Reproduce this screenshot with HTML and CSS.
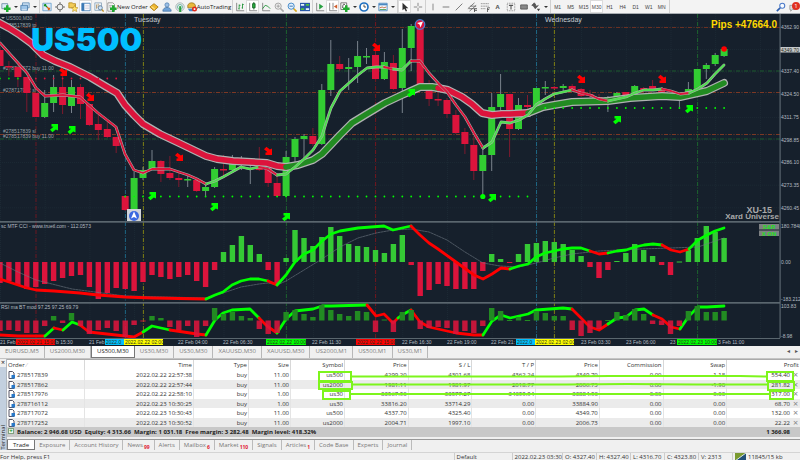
FILE: index.html
```html
<!DOCTYPE html>
<html lang="en">
<head>
<meta charset="utf-8">
<title>US500,M30</title>
<link rel="stylesheet" href="styles.css">
</head>
<body>
<header class="toolbar">
  <div class="group">
    <button class="tool drop" aria-label="New chart"><svg viewBox="0 0 12 12"><path d="M1 2h7v6H1z" fill="#dcecf7" stroke="#6b8ba4"/><path d="M6 4h3v2.500h2.500v3H9V12H6V9.500H3.500v-3H6z" fill="#20b030"/></svg></button>
    <button class="tool drop" aria-label="Profiles"><svg viewBox="0 0 12 12"><path d="M3 1h8v6H3z" fill="#cfe3f5" stroke="#5d8bb5"/><path d="M1 4h8v6H1z" fill="#9cc4e8" stroke="#4a7dac"/><path d="M2 9.500h6" stroke="#fff"/></svg></button>
  </div>
  <div class="group">
    <button class="tool" aria-label="Market watch"><svg viewBox="0 0 12 12"><path d="M1 1.500h10v9H1z" fill="#d8eaf8" stroke="#6aa0cc"/><path d="M3 3l3 3M3 3h2M3 3v2" stroke="#109020" stroke-width="1.500"/><path d="M6 6l3 3M9 9H7M9 9V7" stroke="#e06010" stroke-width="1.500"/></svg></button>
    <button class="tool" aria-label="Data window"><svg viewBox="0 0 12 12"><path d="M6 0v12M0 6h12" stroke="#555"/><circle cx="6" cy="6" r="3.500" fill="#eee" stroke="#555"/></svg></button>
    <button class="tool" aria-label="Navigator"><svg viewBox="0 0 12 12"><path d="M1 3V1h4l1 1h3v5H1z" fill="#f2cc58" stroke="#b58a20"/><path d="M8 4l1.200 2.500 2.800.3-2 2 .5 2.700L8 10.200 5.500 11.500 6 8.800l-2-2 2.800-.3z" fill="#ffe36b" stroke="#b58a20" stroke-width=".7"/></svg></button>
    <button class="tool on" aria-label="Terminal"><svg viewBox="0 0 12 12"><path d="M1 1.500h10v9H1z" fill="#fff" stroke="#3a78b5"/><path d="M1 1.500h3v9H1z" fill="#3a78b5"/><path d="M5 4h5M5 6h5M5 8h5" stroke="#ccd"/></svg></button>
    <button class="tool" aria-label="Strategy tester"><svg viewBox="0 0 12 12"><path d="M1 1h8v9H1z" fill="#eef4fa" stroke="#8aa4ba"/><path d="M3 3v5M5 2v5M7 4v4" stroke="#b09060"/><circle cx="7.500" cy="7" r="2.500" fill="#cfe4f7" stroke="#58799a"/><path d="M9.500 9l2 2.500" stroke="#c09020" stroke-width="1.500"/></svg></button>
  </div>
  <div class="group">
    <button class="tool wide"><svg viewBox="0 0 12 12"><path d="M1 1h6l2 2v8H1z" fill="#fff" stroke="#888"/><path d="M2.500 4h4M2.500 6h3" stroke="#999"/><path d="M6 4h3v2.500h2.500v3H9V12H6V9.500H3.500v-3H6z" fill="#20a830"/></svg>New Order</button>
    <button class="tool" aria-label="MetaEditor"><svg viewBox="0 0 12 12"><path d="M1 6l5-4 5 4-5 4.500z" fill="#f0b830" stroke="#a87810"/><path d="M3 5.500l4 3" stroke="#fff3b0"/></svg></button>
    <button class="tool" aria-label="Community"><svg viewBox="0 0 12 12"><circle cx="6" cy="3.500" r="2.500" fill="#9cc0e6" stroke="#5a86b4"/><path d="M1 11c0-6 10-6 10 0z" fill="#6fa2d8" stroke="#4a78a8"/></svg></button>
    <button class="tool" aria-label="Signals"><svg viewBox="0 0 12 12"><circle cx="6" cy="6" r="5" fill="none" stroke="#9aa"/><circle cx="6" cy="6" r="3" fill="none" stroke="#5a9"/><path d="M5 5h2.500v7H5z" fill="#2aa040"/></svg></button>
    <button class="tool wide"><svg viewBox="0 0 12 12"><path d="M1 4c1-4 8-4 9 0v3H1z" fill="#e9b93c" stroke="#9a7a20"/><path d="M1 8h8l-2 3H3z" fill="#4888c8"/><circle cx="9" cy="8.500" r="3" fill="#e02818"/><path d="M8 7.500h2v2H8z" fill="#fff"/></svg>AutoTrading</button>
  </div>
  <div class="group">
    <button class="tool" aria-label="Bar chart"><svg viewBox="0 0 12 12"><path d="M2 1v9.500h9" fill="none" stroke="#777"/><path d="M5 3v6M4 8h1M5 4h1.500M9 2v6M8 7h1M9 3h1.500" stroke="#189030"/></svg></button>
    <button class="tool on" aria-label="Candlesticks"><svg viewBox="0 0 12 12"><path d="M2 1v9.500h9" fill="none" stroke="#777"/><path d="M7 0v9" stroke="#106020"/><path d="M5.500 2h3v5h-3z" fill="#28b040" stroke="#106020"/></svg></button>
    <button class="tool" aria-label="Line chart"><svg viewBox="0 0 12 12"><path d="M2 1v9.500h9" fill="none" stroke="#777"/><path d="M2 8l3-4 3 1 3 3" fill="none" stroke="#189030"/></svg></button>
    <button class="tool" aria-label="Zoom in"><svg viewBox="0 0 12 12"><path d="M7.500 7.500l4 4" stroke="#aaa" stroke-width="2"/><circle cx="5" cy="5" r="3.700" fill="#eee" stroke="#999"/><path d="M3 5h4M5 3v4" stroke="#999"/></svg></button>
    <button class="tool" aria-label="Zoom out"><svg viewBox="0 0 12 12"><path d="M7.500 7.500l4 4" stroke="#d8a820" stroke-width="2"/><circle cx="5" cy="5" r="3.700" fill="#e4f2ff" stroke="#2878c0"/><path d="M3 5h4" stroke="#2060a0"/></svg></button>
    <button class="tool" aria-label="Tile windows"><svg viewBox="0 0 12 12"><path d="M0 1h12v10H0z" fill="#2858a8"/><path d="M1 2.500h4v2H1zM7 7.500h4v2H7z" fill="#e8f4ff"/><path d="M7 2.500h4v2H7zM1 7.500h4v2H1z" fill="#50c040"/></svg></button>
  </div>
  <div class="group">
    <button class="tool" aria-label="Auto scroll"><svg viewBox="0 0 12 12"><path d="M2 1v9.500h9" fill="none" stroke="#777"/><path d="M5 2l5 3.500L5 9z" fill="#28a040"/></svg></button>
    <button class="tool on" aria-label="Chart shift"><svg viewBox="0 0 12 12"><path d="M2 1v9.500h9M6 1v8" fill="none" stroke="#777"/><path d="M11 3L7 5.500 11 8z" fill="#d06030"/></svg></button>
    <button class="tool drop" aria-label="Indicators"><svg viewBox="0 0 12 12"><path d="M1 1h7v8H1z" fill="#fff" stroke="#666"/><path d="M3 7c1-6 1-4 3-4" fill="none" stroke="#333"/><path d="M6 4h3v2.500h2.500v3H9V12H6V9.500H3.500v-3H6z" fill="#20a830"/></svg></button>
    <button class="tool drop" aria-label="Periods"><svg viewBox="0 0 12 12"><circle cx="6" cy="6" r="4.800" fill="#fff" stroke="#2070c0" stroke-width="2"/><path d="M6 3v3h2.500" fill="none" stroke="#333"/></svg></button>
    <button class="tool drop" aria-label="Templates"><svg viewBox="0 0 12 12"><path d="M1 1.500h10v9H1z" fill="#f2f8ff" stroke="#4a88c0"/><path d="M1 2h10v2H1z" fill="#4a88c0"/><path d="M2 7l3-1 2 1 3-1" fill="none" stroke="#c06030"/><path d="M2 9h8" stroke="#40a050"/></svg></button>
  </div>
  <div class="group">
    <button class="tool on" aria-label="Cursor"><svg viewBox="0 0 12 12"><path d="M3 1v9l2.200-2L7 11.500l1.500-.8L7 7.500h3z" fill="#333"/></svg></button>
    <button class="tool" aria-label="Crosshair"><svg viewBox="0 0 12 12"><path d="M6 1v4M6 7v4M1 6h4M7 6h4" stroke="#777"/></svg></button>
  </div>
  <div class="group">
    <button class="tool" aria-label="Vertical line"><svg viewBox="0 0 12 12"><path d="M6 2v8" stroke="#777"/></svg></button>
    <button class="tool" aria-label="Horizontal line"><svg viewBox="0 0 12 12"><path d="M2 6h8" stroke="#666"/></svg></button>
    <button class="tool" aria-label="Trendline"><svg viewBox="0 0 12 12"><path d="M2 10l8-8" stroke="#666"/></svg></button>
    <button class="tool" aria-label="Channel"><svg viewBox="0 0 12 12"><path d="M1 8l8-7M3 11l8-7M2 8h7M4 5h7" stroke="#666"/><path d="M9 8v4M9 10h3M9 8h3" stroke="#444"/></svg></button>
    <button class="tool" aria-label="Fibonacci"><svg viewBox="0 0 12 12"><path d="M1 2h10M1 5h10M1 8h6" stroke="#888" stroke-dasharray="1.500 .5"/><path d="M9 7v5M9 9h2M9 7h3" stroke="#555"/></svg></button>
    <button class="tool glyph">A</button>
    <button class="tool" aria-label="Text label"><svg viewBox="0 0 12 12"><path d="M1.500 1.500h9v9h-9z" fill="none" stroke="#777" stroke-dasharray="1 1"/><path d="M3.500 4h5M6 4v5" stroke="#555" stroke-width="1.300"/></svg></button>
    <button class="tool" aria-label="Shapes"><svg viewBox="0 0 12 12"><path d="M2 3.500h8v5H2z" fill="#888" stroke="#555"/></svg></button>
    <button class="tool drop" aria-label="Arrows"><svg viewBox="0 0 12 12"><path d="M1 4l3-3 2 3-2 1zM3 5l2 3 4-4" fill="#555" stroke="#555"/><path d="M7 8l4 0-2 3z" fill="#444"/></svg></button>
  </div>
  <div class="group frames">
    <button class="tool">M1</button><button class="tool">M5</button><button class="tool">M15</button><button class="tool on">M30</button><button class="tool">H1</button><button class="tool">H4</button><button class="tool">D1</button><button class="tool">W1</button><button class="tool">MN</button>
  </div>
  <div class="group end">
    <button class="tool" aria-label="Search"><svg viewBox="0 0 12 12"><path d="M5 7l-4 4" stroke="#3060b0" stroke-width="2"/><circle cx="7.500" cy="4.500" r="3" fill="#f8fbff" stroke="#4878c8" stroke-width="1.300"/></svg></button>
    <button class="tool alerts" aria-label="Notifications"><svg viewBox="0 0 12 12"><path d="M1 4h8v5H4l-2 2V9H1z" fill="#ddd" stroke="#999"/></svg><span class="badge">1</span></button>
  </div>
</header>

<main>
  <svg class="chart" id="chart" viewBox="0 14 800 332" role="img" aria-label="US500 M30 price chart with CCI and RSI"></svg>

  <nav class="charttabs">
    <a href="#">EURUSD,M5</a><a href="#">US2000,M30</a><a href="#" class="active">US500,M30</a><a href="#">US30,M30</a><a href="#">US30,M30</a><a href="#">XAUUSD,M30</a><a href="#">XAUUSD,M30</a><a href="#">US2000,M1</a><a href="#">US500,M1</a><a href="#">US30,M1</a>
    <span class="scroll">◂ &nbsp; ▸</span>
  </nav>

  <section class="terminal">
    <aside class="rail"><button class="close" aria-label="Close terminal">×</button><span class="railname">Terminal</span></aside>
    <div class="panel">
      <div class="orders">
        <table>
          <colgroup><col class="c-order"><col class="c-time"><col class="c-type"><col class="c-size"><col class="c-symbol"><col class="c-num"><col class="c-num"><col class="c-num"><col class="c-num"><col class="c-num"><col class="c-num"><col class="c-profit"><col class="c-x"></colgroup>
          <thead><tr><th>Order <span class="sort">⁄</span></th><th>Time</th><th>Type</th><th>Size</th><th>Symbol</th><th>Price</th><th>S / L</th><th>T / P</th><th>Price</th><th>Commission</th><th>Swap</th><th colspan="2">Profit</th></tr></thead>
          <tbody id="rows"></tbody>
          <tfoot><tr><td colspan="11"><span class="plus">+</span>Balance: 2 946.68 USD&nbsp; Equity: 4 313.66&nbsp; Margin: 1 031.18&nbsp; Free margin: 3 282.48&nbsp; Margin level: 418.32%</td><td>1 366.98</td><td></td></tr></tfoot>
        </table>
        <svg class="marks" viewBox="0 0 793 78" preserveAspectRatio="none" aria-hidden="true">
          <path d="M312 13h32v9h-32zM312 23h33v7h-33zM316 32h27v8h-27zM760 13h26v9h-26zM761 23h26v8h-26zM763 32h23v8h-23zM344 17.500H553l50-.5h130l27 .5M345 25.500H560l60-.5 70 .5h71M343 35h420"/>
        </svg>
      </div>
      <nav class="termtabs">
        <a href="#" class="active">Trade</a><a href="#">Exposure</a><a href="#">Account History</a><a href="#">News<sub>99</sub></a><a href="#">Alerts</a><a href="#">Mailbox<sub>6</sub></a><a href="#">Market<sub>110</sub></a><a href="#">Signals</a><a href="#">Articles<sub>1</sub></a><a href="#">Code Base</a><a href="#">Experts</a><a href="#">Journal</a>
      </nav>
    </div>
  </section>
</main>

<footer class="status">
  <span class="help">For Help, press F1</span><span class="s-name">Default</span><span class="s-date">2022.02.23 03:30</span><span>O: 4327.40</span><span>H: 4327.40</span><span>L: 4316.70</span><span>C: 4323.80</span><span>V: 2313</span>
  <span class="s-net"><svg viewBox="0 0 11 8"><path d="M0 0h11v8H0z" fill="#7a9a30"/><path d="M11 0v8H0z" fill="#204e78"/><path d="M0 8L11 0" stroke="#d8e4e8"/></svg>11845/15 kb</span>
</footer>
<script src="chart.js"></script>
</body>
</html>
```

FILE: styles.css
```css
* { box-sizing: border-box; }
body {
  margin: 0;
  height: 100vh;
  display: flex;
  flex-direction: column;
  overflow: hidden;
  background: #f0f0f0;
  color: #333;
  font: 6px/8px "Open Sans", "Noto Sans", sans-serif;
}
button { font: inherit; color: inherit; border: 0; padding: 0; margin: 0; background: none; }
a { color: inherit; text-decoration: none; }

.toolbar { display: flex; flex: none; height: 14px; background: #f3f3f3; border-bottom: 1px solid #a8adb2; }
.group { display: flex; align-items: center; padding-right: 1px; border-right: 1px solid #d0d0d0; }
.group.end { margin-left: auto; border: 0; padding: 0; }
.tool { position: relative; display: flex; align-items: center; justify-content: center; width: 13px; height: 13px; }
.tool svg { width: 10px; height: 10px; flex: none; }
.tool.on { background: #fff; box-shadow: inset 0 0 0 1px #dcdcdc; }
.tool.drop { width: 19px; justify-content: flex-start; padding-left: 1px; }
.tool.drop::after { content: ""; margin-left: 3px; border: 2px solid transparent; border-top-color: #333; border-bottom: 0; }
.tool.wide { width: auto; padding: 0; color: #222; }
.tool.glyph { font-weight: 700; color: #555; }
.frames { font: 5px/8px "Liberation Sans", sans-serif; color: #444; }
.badge { position: absolute; top: 2px; right: 0; width: 8px; height: 8px; border-radius: 50%; background: #e03020; color: #fff; font-size: 6px; text-align: center; }

main { flex: 1; min-height: 0; }
.chart { display: block; width: 100%; height: auto; background: #16202c; font-family: "Liberation Sans", sans-serif; }
.chart .small { font-size: 5px; fill: #b4bbc1; }
.chart .dim { fill: #9aa3aa; }
.chart .tag { font-size: 5px; fill: #2b2f20; }
.chart .symbol { font: 900 32px Inter, sans-serif; fill: #00bfff; }
.chart .day { font-size: 7px; fill: #c8ced3; }
.chart .pips { font-size: 10px; font-weight: 700; fill: #ffd800; }
.chart .mark { font-size: 9px; font-weight: 700; fill: #a9a9a9; }
.chart .brand { font-size: 8px; font-weight: 700; fill: #a9a9a9; }
.chart .chip { font-size: 6px; font-weight: 700; fill: #20e020; }

.charttabs { display: flex; height: 12px; align-items: stretch; background: #f0f0f0; color: #808080; line-height: 11px; }
.charttabs a { padding: 0 5px; border-right: 1px solid #b8b8b8; }
.charttabs .active { background: #fff; color: #222; border: 1px solid #777; border-top: 0; }
.charttabs .scroll { margin-left: auto; padding-right: 2px; color: #555; }

.terminal { display: flex; height: 92px; border-top: 1px solid #c4c4c4; }
.rail { display: flex; flex-direction: column; justify-content: space-between; align-items: center; width: 7px; background: linear-gradient(#f0f0f0 8px, #c3d0df 8px); border-right: 1px solid #b0b8c0; color: #222; }
.close { font-size: 7px; line-height: 8px; }
.railname { writing-mode: vertical-rl; transform: rotate(180deg); line-height: 6px; }
.panel { flex: 1; min-width: 0; }
.orders { position: relative; }
table { width: 100%; table-layout: fixed; border-spacing: 0; background: #fff; line-height: 8px; border-top: 1px solid #aaa; }
.c-order { width: 78px; } .c-time { width: 109px; } .c-type { width: 55px; } .c-size { width: 42px; } .c-symbol { width: 54px; } .c-x { width: 9px; }
th, td { height: 9px; padding: 0 1px; text-align: right; font-weight: 400; white-space: nowrap; overflow: hidden; border-right: 1px solid #e4e4e4; }
th:first-child, td:first-child { text-align: left; }
thead th { height: 10px; border-right-color: #d8d8d8; }
.sort { color: #bbb; }
tbody tr:nth-child(odd) td { height: 10px; }
tbody tr:nth-child(even) { background: #ebebeb; }
thead th:last-child, td:nth-last-child(-n+2) { border: 0; }
tbody td:last-child { padding: 0; text-align: center; color: #888; font-size: 9px; }
.doc { width: 7px; height: 8px; margin: 0 2px 0 0; vertical-align: top; }
tfoot td { height: 10px; background: #c8c8c8; font-weight: 700; color: #222; border: 0; }
.plus { display: inline-block; width: 6px; height: 6px; margin-right: 3px; line-height: 4px; text-align: center; background: #e8f5e8; border: 1px solid #80a080; color: #109020; vertical-align: top; }
.marks { position: absolute; inset: 0; width: 100%; height: 78px; fill: none; stroke: #7df51c; stroke-width: 2; pointer-events: none; }

.termtabs { display: flex; margin-top: 2px; height: 11px; border-top: 1px solid #999; color: #777; line-height: 10px; }
.termtabs a { padding: 0 4px; border-right: 1px solid #bbb; }
.termtabs .active { background: #fff; color: #222; padding: 0 5px; border: 1px solid #777; border-top: 0; }
.termtabs sub { margin-left: 1px; font-size: 5px; font-weight: 700; line-height: 0; color: #e02030; }

.status { display: flex; flex: none; height: 8px; overflow: hidden; border-top: 1px solid #d4d4d4; white-space: nowrap; }
.status span { flex: 0 0 34px; padding-left: 2px; border-left: 1px solid #ccc; }
.status .help { flex: 1 1 auto; padding: 0; border: 0; }
.status .s-name { flex-basis: 58px; }
.status .s-date { flex-basis: 50px; }
.status .s-net { flex-basis: 68px; }
.s-net svg { width: 11px; height: 8px; margin-right: 2px; vertical-align: top; }
```

FILE: chart.js
```js
const RED = '#dc143c', LIME = '#32cd32', STEP = 8.94;
const X = i => +(i * STEP).toFixed(1);
const out = [];
const add = s => out.push(s);
const rect = (x, y, w, h, fill) => add(`<rect x="${x}" y="${y}" width="${w}" height="${h}" fill="${fill}"/>`);
const text = (x, y, s, cls, extra = '') => add(`<text x="${x}" y="${y}" class="${cls}" ${extra}>${s}</text>`);
const line = (x1, y1, x2, y2, c, w = 1, dash = '') =>
  add(`<path d="M${x1} ${y1}L${x2} ${y2}" stroke="${c}" stroke-width="${w}" ${dash && `stroke-dasharray="${dash}"`}/>`);
const poly = (pts, c, w, extra = '') =>
  add(`<polyline points="${pts}" fill="none" stroke="${c}" stroke-width="${w}" stroke-linejoin="round" stroke-linecap="round" ${extra}/>`);

// Faint grid, then session and price levels
for (let x = 0.5; x < 780; x += 44.7) line(x, 14, x, 338, '#1c2934', 1, '1 1');
for (let y = 27; y < 220; y += 22.6) line(0, y, 780, y, '#1c2934', 1, '1 1');
[[27.5, '#6a3022'], [71, '#1d5a2e'], [92.5, '#7c3824'], [134.5, '#7c3824'], [139, '#1d5a2e']]
  .forEach(([y, c]) => line(0, y, 780, y, c, 1, '4 1.500 1 1.500'));
[[36, '#6c1620'], [125.4, '#1d6684'], [143.4, '#7f8014'], [286.4, '#1c642e'], [375.6, '#76161e'], [536.5, '#1d6684'], [554.4, '#7f8014'], [697.6, '#1c642e']]
  .forEach(([x, c]) => line(x, 14, x, 338, c, 1, '4 1.500 1 1.500'));

text(6, 20, 'US500,M30', 'small dim');
add('<path d="M1 17h4l-2 2z" fill="#aaa"/>');
[[27, '#278517839 tp'], [70, '#278717072 buy 11.00'], [92, '#278717072 sl'], [133, '#278517839 sl'], [138, '#278517839 buy 11.00']]
  .forEach(([y, s]) => text(3, y, s, 'small dim'));

// Candles: direction, wick top, body top, body bottom, wick bottom
const candles = `R47 50 66 66,R61 66 67 76,R65 67 77 87,R77 77 93 112,R93 93 117 117,G90 103 117 118,G75 87 103 112,R76 87 105 114,G80 87 106 113,R84 87 104 119,R104 104 125 126,R115 124 130 140,R119 129 137 138,R137 137 146 153,R196 196 210 211,G172 178 210 210,G167 170 178 180,G150 161 169 170,R160 161 174 182,R156 173 178 180,R173 178 180 187,G174 179 180 187,R180 180 191 192,G183 187 191 196,G167 169 187 188,R155 169 170 178,G155 163 170 171,G156 160 162 170,G158 160 161 184,R147 165 170 171,R165 168 183 187,R177 183 196 197,G151 157 196 197,G137 139 157 162,G134 136 139 158,R128 136 144 146,G84 90 144 145,G40 64 90 96,R56 64 69 71,G58 67 69 90,G41 56 67 83,G48 56 57 64,R50 55 79 79,G52 62 79 80,R55 63 89 90,G29 48 88 113,G24 26 48 71,R20 25 90 90,R80 90 99 106,R91 99 100 106,R98 100 114 118,R110 115 133 134,R128 132 144 154,R136 145 171 180,G145 155 171 196,G93 107 155 171,G74 94 107 118,R94 94 129 157,G98 105 129 130,R95 105 107 110,G88 88 109 110,G81 87 88 95,R86 87 88 89,G84 86 88 91,R84 86 90 91,R88 89 96 97,R90 94 95 100,R94 97 99 100,G96 97 100 112,G92 93 98 98,R92 92 95 96,G85 86 94 94,R87 88 90 92,R80 86 89 91,R88 89 95 96,R93 98 99 99,G97 98 100 107,G82 89 93 95,G69 69 89 90,G63 65 69 79,G53 55 64 66,G47 49 56 57`.split(',');
candles.forEach((c, i) => {
  const up = c[0] === 'G', [a, b, d, e] = c.slice(1).split(' ').map(Number);
  line(X(i), a, X(i), e, up ? '#79828c' : '#7c1a2e');
  rect((X(i) - 3.5).toFixed(1), b, 7, Math.max(1.5, d - b), up ? LIME : RED);
});

// Coloured line made of runs; consecutive runs share their end point
function runs(str, colours, w, outline, ow) {
  const parts = str.split('|').map(p => p.trim());
  const lists = parts.map((p, k) => {
    const pts = p.slice(1);
    return [p[0], k ? parts[k - 1].split(' ').pop().replace(/^[RG]/, '') + ' ' + pts : pts];
  });
  if (outline) lists.forEach(([, pts]) => poly(pts, outline, ow));
  lists.forEach(([k, pts]) => poly(pts, colours[k], w));
}
runs('R-2,22 9,28 20,35 31,43 43,55 55,61 70,67 90,77 105,86 117,93 125,105 134,115 143,124 160,134 179,143 206,156 217,159 233,161 267,163 277,166 286,167|G298,165 313,160 322,154 340,135 352,123 365,115 385,103 402,95 411,91 420,87 432,87 438,88|R448,90 462,97 472,104 482,113 492,115 502,114 510,114 528,113|G543,107 554,105 572,102 608,101 630,98 662,96 680,97 689,95 707,91 724,83',
  { R: RED, G: '#228b22' }, 5.5, '#b0b2b2', 8);
runs('R0,43 18,63 27,73 36,88 45,96 63,95 80,97 89,105 98,113 107,120 116,127 125,154 134,170 143,173 152,169 170,169 179,172 188,175 197,179 206,184|G215,181 223,177 232,172 241,167 250,169 259,167|R268,169 277,175|G286,174 295,167 304,159 313,150 322,136 327,120 331,108 340,91 349,83 358,75 367,68 376,67 384,67|R393,69|G402,70 411,61|R420,61 429,73 438,83 447,92 456,105 465,117 474,133 483,148|G492,142 501,122 510,123 519,120 528,115 536,105 545,99 554,94 563,92 572,90|R581,93 590,95 599,99 608,101|G617,99 626,97 635,93 644,90 653,90 662,89|R671,91 680,94 689,93|G698,89 707,83 715,74 724,65',
  { R: RED, G: '#4fdf4f' }, 1.8, '#a9b0a9', 2.8);

// Trailing dots and arrows
const dot = (i, y, c, r = 0.9) => add(`<circle cx="${X(i)}" cy="${y}" r="${r}" fill="${c}"/>`);
for (let i = 0; i < 3; i++) dot(i, 78.5, '#00e000');
for (let i = 3; i < 14; i++) dot(i, 78.5, RED);
for (let i = 14; i < 60; i++) dot(i, 196.5, '#00ff00');
for (let i = 61; i < 82; i++) dot(i, 108, '#00ff00');
dot(54, 196.5, '#00ff00', 2.6);
dot(81, 49, '#ff0000', 2.8);
const arrow = (x, y, c, flip) => add(`<path transform="translate(${x} ${y}) scale(1 ${flip})" d="M-2.500-4H4V2.500L1.800 1.500-1.500 4.200-4 1.800-.500-1.200-2.500-1.500z" fill="${c}"/>`);
[[63, 72], [90, 97], [179, 157], [268, 151], [376, 47], [581, 79], [662, 79]].forEach(([x, y]) => arrow(x, y, '#ff0000', -1));
[[54, 128], [71.5, 130], [152, 196], [214, 207], [286, 217], [411, 93], [492, 198], [617, 120], [689, 109]].forEach(([x, y]) => arrow(x, y, '#00ff00', 1));
add('<circle cx="420" cy="24.500" r="4.800" fill="#dc143c" stroke="#4a7fd0" stroke-width="1.200"/><path d="M417 23l6-1.500-2.500 6-1-3z" fill="#fff"/>');
rect(127, 209, 14, 13, '#d0d3d8');
add('<circle cx="134" cy="216" r="5" fill="#3968e0"/><path d="M134 211.500l3 7-3-1.500-3 1.500z" fill="#fff"/>');

text(31, 51, 'US500', 'symbol');
text(134, 22, 'Tuesday', 'day');
text(545, 22, 'Wednesday', 'day');
text(777, 28, 'Pips +47664.0', 'pips', 'text-anchor="end"');
text(772, 213, 'XU-15', 'mark', 'text-anchor="end"');
text(779, 219, 'Xard Universe', 'brand', 'text-anchor="end"');

// Panel dividers
rect(0, 221, 780, 1.7, '#5a666e');
rect(0, 302, 780, 1.7, '#5a666e');

// Histograms: end of each bar around a base line
function bars(values, base, up, down) {
  values.split(' ').forEach((v, i) => {
    const y = Math.min(+v, base);
    rect((X(i) - 2.7).toFixed(1), y, 5.4, Math.max(1, Math.abs(v - base)), v < base ? up : down);
  });
}
bars('283 281 285 289 287 284 281 278 276 275 287 299 293 288 289 291 282 275 277 279 277 275 281 287 270 252 245 236 245 254 270 284 258 230 238 246 237 227 236 244 246 247 250 253 244 235 265 296 290 284 286 289 289 289 271 254 259 262.5 254 244 243 241 242 244 250 256 267 278 270 261 253 244 250 256 265 275 261.5 250 238 226 232 238', 262, '#35c935', RED);
poly('0,263 18,272 36,280 72,289 125,296 206,298 223,293 241,287 259,284 268,283 277,285 286,281 304,270 322,259 340,247 358,238 376,233 393,230 411,229 429,232 447,240 465,252 483,263 500,266 519,267 536,263 554,258 572,254 599,251 640,249 671,248 698,247 724,238', '#717b84', 0.6, 'stroke-dasharray="2 1"');
const hot = { R: '#ff0000', G: '#00ff00' };
runs('R0,279 9,282 27,288 36,290 54,291 80,293 98,295 125,297 152,298 206,299|G215,295 223,292 232,285 241,281 250,279 259,279 268,281|R277,285|G286,275 295,262 304,254 313,250 322,241 331,234 340,231 358,228 384,226 393,230 411,226|R420,235 429,243 438,249 456,262 474,275 483,279 492,274 501,268 510,269|G519,266 528,264 536,257 545,253 554,251 563,249 572,248 581,248 590,251|R599,254 608,253|G617,251 626,250 635,247 644,245 653,244 662,245|R671,250 680,252 689,249|G698,240 707,235 715,231 724,228', hot, 2.8);
runs('R0,335 18,336 45,336|G54,328|R63,330|G72,322 80,325|R89,332 107,334 134,337 143,332|G152,326 170,330|R197,334 206,335|G215,320 223,313 232,310 250,309 259,318|R267,326 277,333|G286,319 295,311 304,310 313,309 322,306 331,306 367,305|R376,316 384,314 393,323 398,318|G402,315 411,310|R420,322 429,327 456,333 474,335 483,335|G492,321 501,315 510,318 519,316 528,314 536,310 563,308 572,309|R581,318 590,327 599,330 608,324|G617,318 626,317 635,310 644,309 653,315|R662,319 671,327 680,329|G689,316 698,307 707,307 724,306', hot, 2.8);
bars('331 330 331 333 333 326 316 323 313 326 334 330 328 331 337 325 321 316 318 327 330 326 337 326 308 314 312 316 318 329 334 333 312 310 314 317 305 310 314 316 311 312 332 319.5 332 312 310 329 328 327 328 334 331 333 326 308 311 320 317 320 311 313 316 316 330 336 333 329 320 312 315 309 314 324 325 334 326 311 306 312 312 311', 320.5, '#228b22', '#dc143ce0');

text(1, 228, 'sc MTF CCI - www.truetl.com - 112.0573', 'small');
text(1, 309, 'RSI ma BT mod 97.25 97.25 69.79', 'small');
[['S&amp;R', 224], ['X ON', 230.5]].forEach(([s, y]) => {
  rect(759, y, 20, 5.5, '#7d8082');
  text(769, y + 5, s, 'chip', 'text-anchor="middle"');
});

// Price scale
rect(779.5, 14, 1.2, 324, '#5a666e');
rect(780.5, 47, 19.5, 5.5, '#c4c8cb');
[[28.5, '4362.90'], [73, '4337.40'], [96, '4324.50'], [119, '4311.75'], [141.5, '4298.85'], [164, '4286.10'], [186.5, '4273.35'], [209.5, '4260.45'], [228, '180.7848'], [264, '0.00'], [301, '-183.212'], [308, '103.83'], [337.5, '-8.98']]
  .forEach(([y, s]) => text(781, y, s, 'small'));
text(781, 51.5, '4349.70', 'tag');

// Time scale; labels next to a marker keep only their uncovered part
rect(0, 338, 780, 1, '#5a666e');
[[0, '21 Feb'], [56, 'b 15:30'], [89, '21 Feb'], [178, '22 Feb 04:00'], [223, '22 Feb 06:30'], [312, '22 Feb 11:30'], [402, '22 Feb 16:30'], [447, '22 Feb 19:00'], [491, '22 Feb 21:'], [581, '23 Feb 03:30'], [626, '23 Feb 06:00'], [670, '23'], [718, '3 Feb 11:00']]
  .forEach(([x, s]) => text(x, 344, s, 'small'));
[[16, 39, '#ff0000', '2022.02.21 15:00'], [105, 19, '#00bfff', '2022.0'], [124, 39, '#ffff00', '2022.02.22 02:00'], [266, 40, '#00ff00', '2022.02.22 10:00'], [356, 39, '#ff0000', '2022.02.22 15:00'], [516, 19, '#00bfff', '2022.0'], [535, 39, '#ffff00', '2022.02.23 02:00'], [677, 40, '#00ff00', '2022.02.23 10:00']]
  .forEach(([x, w, c, s]) => { rect(x, 339, w, 6, c); text(x + 1, 344, s, 'tag'); });

document.getElementById('chart').innerHTML = out.join('');

// Open orders
const orders = [
  ['278517839', '2022.02.22 22:57:38', 'buy', '11.00', 'us500', '4299.20', '4301.68', '4362.24', '4349.70', '0.00', '-1.18', '554.40'],
  ['278517862', '2022.02.22 22:57:44', 'buy', '11.00', 'us2000', '1981.11', '1981.97', '2018.77', '2006.73', '0.00', '-1.90', '281.82'],
  ['278517976', '2022.02.22 22:58:10', 'buy', '1.00', 'us30', '33567.90', '33577.27', '34099.94', '33884.90', '0.00', '0.00', '317.00'],
  ['278716112', '2022.02.23 10:30:25', 'buy', '1.00', 'us30', '33816.20', '33714.29', '0.00', '33884.90', '0.00', '0.00', '68.70'],
  ['278717072', '2022.02.23 10:30:43', 'buy', '11.00', 'us500', '4337.70', '4325.40', '0.00', '4349.70', '0.00', '0.00', '132.00'],
  ['278717252', '2022.02.23 10:30:52', 'buy', '11.00', 'us2000', '2004.71', '1997.10', '0.00', '2006.73', '0.00', '0.00', '22.22']
];
const doc = '<svg class="doc" viewBox="0 0 7 8"><path d="M1 .5h3.500L6 2v5.500H1z" fill="#fff" stroke="#556"/><path d="M3.500 4h3.500v3.500H3.500z" fill="#2878c8"/></svg>';
document.getElementById('rows').innerHTML = orders.map(o =>
  '<tr>' + o.map((v, i) => `<td>${i ? '' : doc}${v}</td>`).join('') + '<td>×</td></tr>').join('');
```
